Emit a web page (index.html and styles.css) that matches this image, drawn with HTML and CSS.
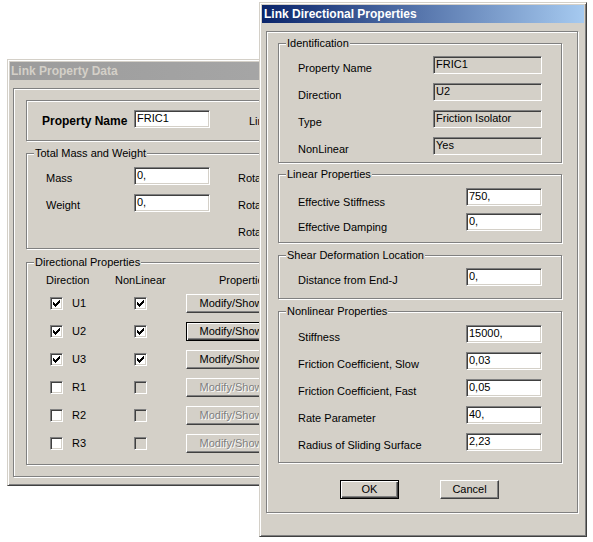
FILE: index.html
```html
<!DOCTYPE html>
<html>
<head>
<meta charset="utf-8">
<title>Link Properties</title>
<link rel="stylesheet" href="styles.css">
</head>
<body>
<div class="desk">
  <div class="win win-back">
    <div class="title title-inactive">Link Property Data</div>
    <div class="panel panel-back">
      <div class="namebox">
        <span class="name-label">Property Name</span>
        <span class="field fld-back">FRIC1</span>
        <span class="lt-label">Link Type</span>
      </div>
      <div class="group bgroup g-mass">
        <div class="gtitle">Total Mass and Weight</div>
        <div class="mass-grid">
          <span class="lbl">Mass</span><span class="field">0,</span><span class="lbl rot">Rotational Inertia 1</span>
          <span class="lbl">Weight</span><span class="field">0,</span><span class="lbl rot">Rotational Inertia 2</span>
          <span></span><span></span><span class="lbl rot">Rotational Inertia 3</span>
        </div>
      </div>
      <div class="group bgroup g-dir">
        <div class="gtitle">Directional Properties</div>
        <div class="dhead"><span>Direction</span><span>NonLinear</span><span class="phead">Properties</span></div>
        <div class="drow">
          <span class="chkwrap"><span class="cb"><svg class="ck" width="7" height="7" viewBox="0 0 7 7"><path d="M0 2h1v3H0zM1 3h1v3H1zM2 4h1v3H2zM3 3h1v3H3zM4 2h1v3H4zM5 1h1v3H5zM6 0h1v3H6z"/></svg></span>U1</span>
          <span class="cb cb2"><svg class="ck" width="7" height="7" viewBox="0 0 7 7"><path d="M0 2h1v3H0zM1 3h1v3H1zM2 4h1v3H2zM3 3h1v3H3zM4 2h1v3H4zM5 1h1v3H5zM6 0h1v3H6z"/></svg></span>
          <span class="btn btn-ms">Modify/Show</span>
        </div>
        <div class="drow">
          <span class="chkwrap"><span class="cb"><svg class="ck" width="7" height="7" viewBox="0 0 7 7"><path d="M0 2h1v3H0zM1 3h1v3H1zM2 4h1v3H2zM3 3h1v3H3zM4 2h1v3H4zM5 1h1v3H5zM6 0h1v3H6z"/></svg></span>U2</span>
          <span class="cb cb2"><svg class="ck" width="7" height="7" viewBox="0 0 7 7"><path d="M0 2h1v3H0zM1 3h1v3H1zM2 4h1v3H2zM3 3h1v3H3zM4 2h1v3H4zM5 1h1v3H5zM6 0h1v3H6z"/></svg></span>
          <span class="btn btn-ms btn-def">Modify/Show</span>
        </div>
        <div class="drow">
          <span class="chkwrap"><span class="cb"><svg class="ck" width="7" height="7" viewBox="0 0 7 7"><path d="M0 2h1v3H0zM1 3h1v3H1zM2 4h1v3H2zM3 3h1v3H3zM4 2h1v3H4zM5 1h1v3H5zM6 0h1v3H6z"/></svg></span>U3</span>
          <span class="cb cb2"><svg class="ck" width="7" height="7" viewBox="0 0 7 7"><path d="M0 2h1v3H0zM1 3h1v3H1zM2 4h1v3H2zM3 3h1v3H3zM4 2h1v3H4zM5 1h1v3H5zM6 0h1v3H6z"/></svg></span>
          <span class="btn btn-ms">Modify/Show</span>
        </div>
        <div class="drow">
          <span class="chkwrap"><span class="cb"></span>R1</span>
          <span class="cb cb2 cb-dis"></span>
          <span class="btn btn-ms btn-dis">Modify/Show</span>
        </div>
        <div class="drow">
          <span class="chkwrap"><span class="cb"></span>R2</span>
          <span class="cb cb2 cb-dis"></span>
          <span class="btn btn-ms btn-dis">Modify/Show</span>
        </div>
        <div class="drow">
          <span class="chkwrap"><span class="cb"></span>R3</span>
          <span class="cb cb2 cb-dis"></span>
          <span class="btn btn-ms btn-dis">Modify/Show</span>
        </div>
      </div>
    </div>
  </div>

  <div class="win win-front">
    <div class="title title-active">Link Directional Properties</div>
    <div class="panel panel-front">
      <div class="group fgroup g-ident">
        <div class="gtitle">Identification</div>
        <div class="rows rows-ident">
          <div class="frow"><span class="flbl">Property Name</span><span class="field ro wide">FRIC1</span></div>
          <div class="frow"><span class="flbl">Direction</span><span class="field ro wide">U2</span></div>
          <div class="frow"><span class="flbl">Type</span><span class="field ro wide">Friction Isolator</span></div>
          <div class="frow"><span class="flbl">NonLinear</span><span class="field ro wide">Yes</span></div>
        </div>
      </div>
      <div class="group fgroup g-lin">
        <div class="gtitle">Linear Properties</div>
        <div class="rows rows-lin">
          <div class="frow"><span class="flbl lin">Effective Stiffness</span><span class="field">750,</span></div>
          <div class="frow"><span class="flbl lin">Effective Damping</span><span class="field">0,</span></div>
        </div>
      </div>
      <div class="group fgroup g-shear">
        <div class="gtitle">Shear Deformation Location</div>
        <div class="rows rows-shear">
          <div class="frow"><span class="flbl lo">Distance from End-J</span><span class="field">0,</span></div>
        </div>
      </div>
      <div class="group fgroup g-nl">
        <div class="gtitle">Nonlinear Properties</div>
        <div class="rows rows-nl">
          <div class="frow"><span class="flbl lo">Stiffness</span><span class="field">15000,</span></div>
          <div class="frow"><span class="flbl lo">Friction Coefficient, Slow</span><span class="field">0,03</span></div>
          <div class="frow"><span class="flbl lo">Friction Coefficient, Fast</span><span class="field">0,05</span></div>
          <div class="frow"><span class="flbl lo">Rate Parameter</span><span class="field">40,</span></div>
          <div class="frow"><span class="flbl lo">Radius of Sliding Surface</span><span class="field">2,23</span></div>
        </div>
      </div>
      <div class="btnrow">
        <span class="btn btn-dlg btn-def">OK</span>
        <span class="btn btn-dlg">Cancel</span>
      </div>
    </div>
  </div>
</div>
</body>
</html>
```
FILE: styles.css
```css
html, body {
  margin: 0;
  background: #fff;
}
body {
  font-family: "Liberation Sans", Arial, sans-serif;
  font-size: 11px;
  color: #000;
}
.desk {
  position: relative;
  width: 593px;
  height: 542px;
  overflow: hidden;
}

/* windows */
.win {
  position: absolute;
  box-sizing: border-box;
  background: #d4d0c8;
  border: 1px solid;
  border-color: #d4d0c8 #404040 #404040 #d4d0c8;
  box-shadow: inset 1px 1px 0 #fff, inset -1px -1px 0 #808080;
  padding: 2px;
}
.win-back {
  left: 7px;
  top: 59px;
  width: 330px;
  height: 427px;
}
.win-front {
  left: 259px;
  top: 2px;
  width: 328px;
  height: 535px;
}
.title {
  height: 18px;
  line-height: 18px;
  font-size: 12px;
  font-weight: bold;
  padding-left: 2px;
  white-space: nowrap;
}
.title-active {
  background: linear-gradient(to right, #0a246a, #a6caf0);
  color: #fff;
}
.title-inactive {
  background: linear-gradient(to right, #9c9c9c, #a8a8a8);
  color: #d4d0c8;
  padding-left: 1px;
}

/* etched panels and groups */
.panel,
.group,
.namebox {
  box-sizing: border-box;
  border: 1px solid #808080;
  box-shadow: inset 1px 1px 0 #fff, 1px 1px 0 #fff;
}
.panel {
  margin-top: 8px;
  width: 312px;
}
.panel-front {
  margin-left: 4px;
  height: 482px;
  padding: 11px 0 0 11px;
}
.panel-back {
  margin-left: 3px;
  height: 389px;
  padding: 11px 0 0 12px;
}
.group {
  padding: 0 19px;
}
.fgroup {
  width: 284px;
}
.bgroup {
  width: 285px;
}
.gtitle {
  width: max-content;
  height: 13px;
  line-height: 13px;
  margin: -7px 0 0 -12px;
  padding: 0 1px;
  background: #d4d0c8;
  white-space: nowrap;
}

/* front groups */
.g-lin { margin-top: 11px; padding-bottom: 11px; }
.g-shear { margin-top: 12px; padding-bottom: 12px; }
.g-nl { margin-top: 12px; padding-bottom: 11px; }
.g-ident { padding-bottom: 7px; }

.rows {
  display: flex;
  flex-direction: column;
  row-gap: 9px;
}
.rows-ident { margin-top: 6px; }
.rows-lin { margin-top: 7px; row-gap: 7px; }
.rows-shear { margin-top: 6px; }
.rows-nl { margin-top: 7px; }

.frow {
  display: flex;
  justify-content: space-between;
  align-items: flex-start;
  height: 18px;
}
.flbl {
  margin-top: 6px;
  line-height: 13px;
  white-space: nowrap;
}
.flbl.lin {
  margin-top: 8px;
}
.flbl.lo {
  margin-top: 6px;
}

/* fields */
.field {
  box-sizing: border-box;
  display: block;
  width: 76px;
  height: 18px;
  border: 1px solid;
  border-color: #808080 #fff #fff #808080;
  box-shadow: inset 1px 1px 0 #404040, inset -1px -1px 0 #d4d0c8;
  background: #fff;
  padding: 1px 0 0 2px;
  line-height: 12px;
  white-space: nowrap;
  overflow: hidden;
}
.field.ro {
  background: #d4d0c8;
}
.field.wide {
  width: 109px;
}

/* back window content */
.namebox {
  display: flex;
  align-items: flex-start;
  width: 285px;
  height: 41px;
  padding: 9px 0 0 15px;
}
.name-label {
  width: 92px;
  flex: none;
  margin-top: 4px;
  font-size: 12px;
  font-weight: bold;
  line-height: 14px;
  white-space: nowrap;
}
.fld-back {
  flex: none;
}
.lt-label {
  margin: 5px 0 0 39px;
  line-height: 13px;
  white-space: nowrap;
}
.g-mass {
  margin-top: 12px;
  padding-bottom: 9px;
}
.mass-grid {
  display: grid;
  grid-template-columns: 88px 76px auto;
  grid-auto-rows: 18px;
  row-gap: 9px;
  margin-top: 7px;
}
.lbl {
  margin-top: 5px;
  line-height: 13px;
  white-space: nowrap;
}
.lbl.rot {
  margin-left: 28px;
}
.g-dir {
  margin-top: 13px;
  padding-bottom: 7px;
}
.dhead {
  display: grid;
  grid-template-columns: 69px 71px auto;
  margin: 5px 0 2px;
  line-height: 13px;
  white-space: nowrap;
}
.phead {
  margin-left: 33px;
}
.drow {
  display: grid;
  grid-template-columns: 69px 71px auto;
  align-items: center;
  height: 28px;
}
.chkwrap {
  display: flex;
  align-items: center;
  gap: 9px;
  padding-left: 4px;
  line-height: 13px;
}

/* checkboxes */
.cb {
  box-sizing: border-box;
  display: block;
  width: 13px;
  height: 13px;
  flex: none;
  border: 1px solid;
  border-color: #808080 #fff #fff #808080;
  box-shadow: inset 1px 1px 0 #404040, inset -1px -1px 0 #d4d0c8;
  background: #fff;
  padding: 2px 0 0 2px;
}
.cb2 {
  margin-left: 19px;
}
.cb-dis {
  background: #d4d0c8;
}
.ck {
  display: block;
  fill: #000;
  shape-rendering: crispEdges;
}

/* buttons */
.btn {
  box-sizing: border-box;
  display: block;
  height: 19px;
  border: 1px solid;
  border-color: #fff #404040 #404040 #fff;
  box-shadow: inset -1px -1px 0 #808080;
  background: #d4d0c8;
  text-align: center;
  line-height: 17px;
  white-space: nowrap;
}
.btn-def {
  border-color: #000;
  box-shadow: inset 1px 1px 0 #fff, inset -1px -1px 0 #404040, inset -2px -2px 0 #808080;
}
.btn-ms {
  width: 90px;
}
.btn-dis {
  color: #808080;
  text-shadow: 1px 1px 0 #fff;
}
.btn-dlg {
  width: 59px;
}
.btnrow {
  display: flex;
  gap: 41px;
  margin: 17px 0 0 62px;
}
```
